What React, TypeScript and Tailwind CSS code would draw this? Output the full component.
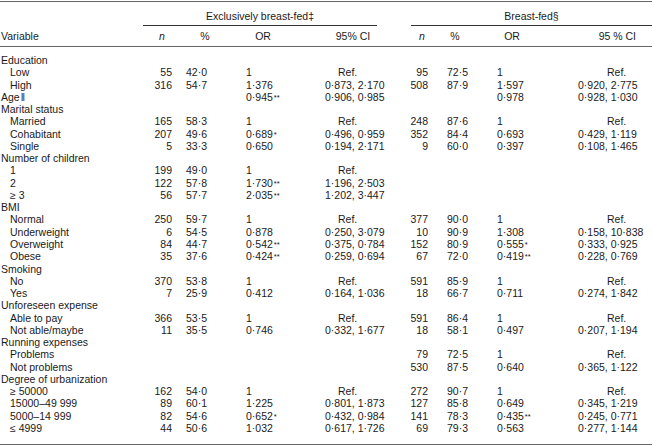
import React from "react"

type Cells = [string, string, string, string]
type Row = {
  label: React.ReactNode
  sub?: boolean
  ex?: Cells
  bf?: Cells
}

const rows: Row[] = [
  { label: "Education" },
  { label: "Low", sub: true, ex: ["55", "42·0", "1", "Ref."], bf: ["95", "72·5", "1", "Ref."] },
  { label: "High", sub: true, ex: ["316", "54·7", "1·376", "0·873, 2·170"], bf: ["508", "87·9", "1·597", "0·920, 2·775"] },
  {
    label: (
      <>
        Age<span className="ml-px text-[10.5px] leading-none">‖</span>
      </>
    ),
    ex: ["", "", "0·945**", "0·906, 0·985"],
    bf: ["", "", "0·978", "0·928, 1·030"],
  },
  { label: "Marital status" },
  { label: "Married", sub: true, ex: ["165", "58·3", "1", "Ref."], bf: ["248", "87·6", "1", "Ref."] },
  { label: "Cohabitant", sub: true, ex: ["207", "49·6", "0·689*", "0·496, 0·959"], bf: ["352", "84·4", "0·693", "0·429, 1·119"] },
  { label: "Single", sub: true, ex: ["5", "33·3", "0·650", "0·194, 2·171"], bf: ["9", "60·0", "0·397", "0·108, 1·465"] },
  { label: "Number of children" },
  { label: "1", sub: true, ex: ["199", "49·0", "1", "Ref."] },
  { label: "2", sub: true, ex: ["122", "57·8", "1·730**", "1·196, 2·503"] },
  { label: "≥ 3", sub: true, ex: ["56", "57·7", "2·035**", "1·202, 3·447"] },
  { label: "BMI" },
  { label: "Normal", sub: true, ex: ["250", "59·7", "1", "Ref."], bf: ["377", "90·0", "1", "Ref."] },
  { label: "Underweight", sub: true, ex: ["6", "54·5", "0·878", "0·250, 3·079"], bf: ["10", "90·9", "1·308", "0·158, 10·838"] },
  { label: "Overweight", sub: true, ex: ["84", "44·7", "0·542**", "0·375, 0·784"], bf: ["152", "80·9", "0·555*", "0·333, 0·925"] },
  { label: "Obese", sub: true, ex: ["35", "37·6", "0·424**", "0·259, 0·694"], bf: ["67", "72·0", "0·419**", "0·228, 0·769"] },
  { label: "Smoking" },
  { label: "No", sub: true, ex: ["370", "53·8", "1", "Ref."], bf: ["591", "85·9", "1", "Ref."] },
  { label: "Yes", sub: true, ex: ["7", "25·9", "0·412", "0·164, 1·036"], bf: ["18", "66·7", "0·711", "0·274, 1·842"] },
  { label: "Unforeseen expense" },
  { label: "Able to pay", sub: true, ex: ["366", "53·5", "1", "Ref."], bf: ["591", "86·4", "1", "Ref."] },
  { label: "Not able/maybe", sub: true, ex: ["11", "35·5", "0·746", "0·332, 1·677"], bf: ["18", "58·1", "0·497", "0·207, 1·194"] },
  { label: "Running expenses" },
  { label: "Problems", sub: true, bf: ["79", "72·5", "1", "Ref."] },
  { label: "Not problems", sub: true, bf: ["530", "87·5", "0·640", "0·365, 1·122"] },
  { label: "Degree of urbanization" },
  { label: "≥ 50000", sub: true, ex: ["162", "54·0", "1", "Ref."], bf: ["272", "90·7", "1", "Ref."] },
  { label: "15000–49 999", sub: true, ex: ["89", "60·1", "1·225", "0·801, 1·873"], bf: ["127", "85·8", "0·649", "0·345, 1·219"] },
  { label: "5000–14 999", sub: true, ex: ["82", "54·6", "0·652*", "0·432, 0·984"], bf: ["141", "78·3", "0·435**", "0·245, 0·771"] },
  { label: "≤ 4999", sub: true, ex: ["44", "50·6", "1·032", "0·617, 1·726"], bf: ["69", "79·3", "0·563", "0·277, 1·144"] },
]

const cols = "grid grid-cols-[140px_44px_42px_74px_106px_32px_34px_80px_100px]"

// splits "0·945**" into value + superscript stars
function Odds({ v }: { v: string }) {
  const m = v.match(/^([^*]*)(\**)$/)
  const base = m ? m[1] : v
  const stars = m ? m[2] : ""
  return (
    <>
      {base}
      {stars && <sup className="relative -top-[1px] ml-px text-[7.5px] leading-none">{stars}</sup>}
    </>
  )
}

export default function App() {
  return (
    <div
      className="w-[652px] bg-white pt-px text-[10.5px] text-[#1a1a1a]"
      style={{ fontFamily: '"Liberation Sans", Arial, sans-serif' }}
    >
      <div className="border-t border-[#666] border-b">
        {/* group headers */}
        <div className={`${cols} pt-[8px] leading-[12px]`}>
          <div />
          <div className="col-span-4 pl-[3px] pr-[29px]">
            <div className="text-center">Exclusively breast-fed‡</div>
            <div className="mt-[3px] border-t border-[#333]" />
          </div>
          <div className="col-span-4 pl-[5px]">
            <div className="text-center">Breast-fed§</div>
            <div className="mt-[3px] border-t border-[#333]" />
          </div>
        </div>
        {/* column headers */}
        <div className={`${cols} h-[21px] items-center border-b border-[#666] leading-[12px]`}>
          <div className="pl-[1px]">Variable</div>
          <div className="text-center italic">n</div>
          <div className="text-center">%</div>
          <div className="text-center">OR</div>
          <div className="text-center">95% CI</div>
          <div className="text-center italic">n</div>
          <div className="text-center">%</div>
          <div className="text-center">OR</div>
          <div className="pr-[16px] text-right">95 % CI</div>
        </div>
        {/* body */}
        <div className="pt-[7px] pb-[10px]">
          {rows.map((r, i) => (
            <div key={i} className={`${cols} h-[12.27px] leading-[12.27px] whitespace-nowrap`}>
              <div className={r.sub ? "pl-[10px]" : "pl-[1px]"}>{r.label}</div>
              <div className="pr-[12px] text-right">{r.ex?.[0]}</div>
              <div className="pr-[19px] text-right">{r.ex?.[1]}</div>
              <div className="pl-[20px]">{r.ex && <Odds v={r.ex[2]} />}</div>
              <div className={r.ex?.[3] === "Ref." ? "pl-[38px]" : "pl-[25px]"}>{r.ex?.[3]}</div>
              <div className="pr-[10px] text-right">{r.bf?.[0]}</div>
              <div className="pr-[4px] text-right">{r.bf?.[1]}</div>
              <div className="pl-[25px]">{r.bf && <Odds v={r.bf[2]} />}</div>
              <div className={r.bf?.[3] === "Ref." ? "pl-[55px]" : "pl-[26px]"}>{r.bf?.[3]}</div>
            </div>
          ))}
        </div>
      </div>
    </div>
  )
}
